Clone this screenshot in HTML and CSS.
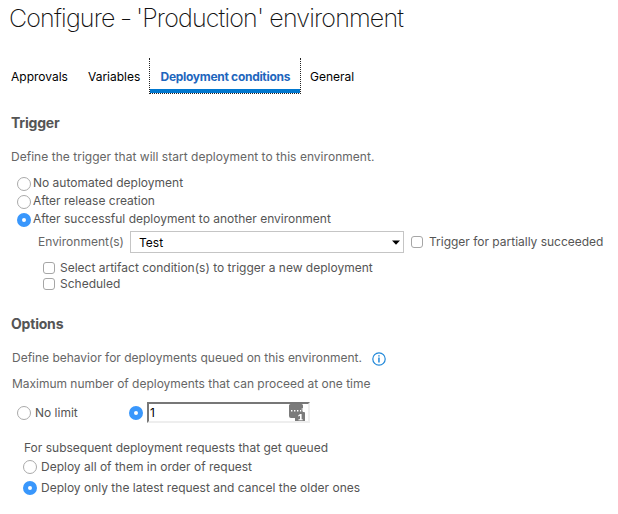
FILE: index.html
```html
<!DOCTYPE html>
<html lang="en">
<head>
<meta charset="utf-8">
<title>Configure environment</title>
<link rel="stylesheet" href="styles.css">
</head>
<body>
<main class="dialog">
  <h1 class="title">Configure <span class="dash">–</span> 'Production' environment</h1>
  <nav class="tabs">
    <a class="tab tab-approvals">Approvals</a>
    <a class="tab tab-variables">Variables</a>
    <a class="tab tab-active"><span>Deployment conditions</span></a>
    <a class="tab tab-general">General</a>
  </nav>

  <section class="trigger">
    <h2 class="heading">Trigger</h2>
    <p class="intro">Define the trigger that will start deployment to this environment.</p>
    <div class="radios">
      <label class="choice"><i class="radio"></i><span>No automated deployment</span></label>
      <label class="choice"><i class="radio"></i><span>After release creation</span></label>
      <label class="choice"><i class="radio on"></i><span>After successful deployment to another environment</span></label>
    </div>
    <div class="environment">
      <span class="env-label">Environment(s)</span>
      <div class="select"><span>Test</span><svg width="8" height="5" viewBox="0 0 8 5"><path d="M0 .5h8L4 4.7z"/></svg></div>
      <i class="check"></i><span class="partial">Trigger for partially succeeded</span>
    </div>
    <div class="checks">
      <label class="check-row"><i class="check"></i><span>Select artifact condition(s) to trigger a new deployment</span></label>
      <label class="check-row"><i class="check"></i><span>Scheduled</span></label>
    </div>
  </section>

  <section class="options">
    <h2 class="heading">Options</h2>
    <p class="behavior"><span>Define behavior for deployments queued on this environment.</span>
      <svg class="info" width="14" height="14" viewBox="0 0 14 14"><circle cx="7" cy="7" r="6.2" fill="none" stroke="#2188d9" stroke-width="1.2"/><path d="M6.2 3.2h1.5v1.4H6.2zM6.2 5.6h1.5v5H6.2z" fill="#2188d9"/></svg>
    </p>
    <p class="maximum">Maximum number of deployments that can proceed at one time</p>
    <div class="limit">
      <i class="radio"></i><span class="no-limit">No limit</span>
      <i class="radio on"></i>
      <div class="number"><span>1</span>
        <svg width="16" height="17" viewBox="0 0 16 17"><path d="M1.5 0H12.5Q14 0 14 1.5V8H15Q16 8 16 9V17H6V14H2Q0 14 0 12V1.5Q0 0 1.5 0z" fill="#7b7b7b"/><path d="M2 6h1.400v1.400H2zM5 6h1.400v1.400H5zM8 6h1.400v1.400H8zM11 6h1v1.400h-1zM12.800 4h.800v3.400h-.800zM9.300 11.300l1.900-1.300h1.400v5.200h1.100v1H9.500v-1H11v-3.500l-1.700.7z" fill="#fff"/></svg>
      </div>
    </div>
    <p class="queued">For subsequent deployment requests that get queued</p>
    <label class="queue-choice"><i class="radio"></i><span>Deploy all of them in order of request</span></label>
    <label class="queue-choice last"><i class="radio on"></i><span>Deploy only the latest request and cancel the older ones</span></label>
  </section>
</main>
</body>
</html>
```
FILE: styles.css
```css
* { box-sizing: border-box; }
body { margin: 0; background: #fff; color: #555; font: 12px/18px Inter, Roboto, sans-serif; white-space: nowrap; }
p, h1, h2 { margin: 0; }
.dialog { width: 618px; height: 514px; overflow: hidden; padding-left: 11px; }
.title { height: 38px; margin-left: -2px; color: #111; font-size: 25px; line-height: 36px; font-weight: 200; letter-spacing: -.83px; }
.dash { display: inline-block; width: 9px; transform: translateX(1px) scaleX(.65); transform-origin: left; }

.tabs { display: flex; height: 36px; margin-top: 20px; color: #000; line-height: 38px; }
.tab-approvals { width: 77px; }
.tab-variables { width: 61px; }
.tab-active { width: 152px; padding-left: 10.5px; border: 1px dotted #222; border-top: 0; box-shadow: inset 0 -4px #0078d0; color: #1e66bd; font-weight: 700; letter-spacing: -.29px; }
.tab-general { margin-left: 9px; }

.heading { height: 20px; color: #555; font-size: 14px; line-height: 20px; font-weight: 700; letter-spacing: -.2px; }
.trigger .heading { margin-top: 19px; }
.intro { margin-top: 15px; color: #666; letter-spacing: .03px; }
.radios { margin: 8px 0 0 6px; }
.choice { display: flex; align-items: center; gap: 2px; height: 18px; }
.choice .radio { margin-top: 2px; }
.radio { flex: none; width: 14px; height: 14px; border: 1px solid #aaa; border-radius: 50%; background: #fff; }
.radio.on { border: 5px solid #3997fc; }
.check { flex: none; width: 12px; height: 12px; border: 1px solid #a6a6a6; border-radius: 3px; background: #fff; }

.environment { display: flex; align-items: center; height: 22px; margin: 3px 0 0 27px; }
.env-label { width: 92px; color: #666; }
.select { display: flex; align-items: center; justify-content: space-between; width: 274px; height: 22px; margin-right: 7px; padding: 2px 3px 0 8px; border: 1px solid #c5c5c5; color: #000; }
.select svg { margin-bottom: 2px; }
.environment .check { margin-right: 6px; }
.partial { letter-spacing: -.01px; }
.checks { margin: 7px 0 0 32px; }
.check-row { display: flex; align-items: center; gap: 5px; height: 16px; }

.options { margin-top: 22px; }
.behavior { display: flex; align-items: center; height: 18px; margin: 15px 0 0 1px; color: #666; letter-spacing: -.01px; }
.info { margin: 2px 0 0 10.5px; }
.maximum { margin: 8px 0 0 1px; color: #666; letter-spacing: -.02px; }
.limit { display: flex; align-items: center; height: 21px; margin: 9px 0 0 6px; }
.no-limit { width: 94px; margin-left: 4px; }
.number { display: flex; justify-content: space-between; width: 163px; height: 21px; margin-left: 4px; padding-right: 3px; border: 2px solid #eee; border-top-color: #777; border-left-color: #777; color: #000; line-height: 18px; }
.number span { padding-left: 1px; }
.queued { margin: 16px 0 0 13px; }
.queue-choice { display: flex; align-items: center; gap: 4px; height: 20px; margin-left: 12px; }
.queue-choice.last { margin-top: 1px; }
```
